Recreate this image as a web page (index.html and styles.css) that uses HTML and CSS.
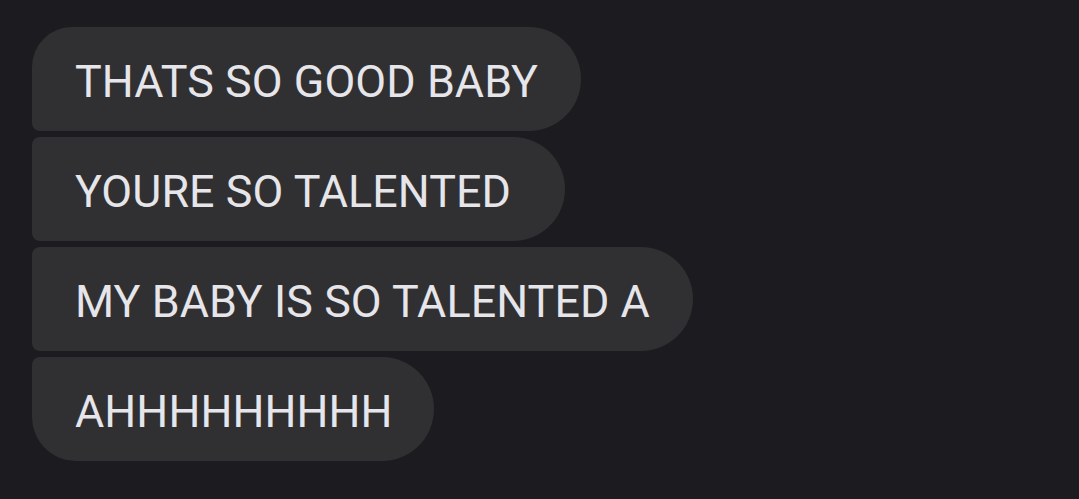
FILE: index.html
```html
<!DOCTYPE html>
<html>
<head>
<meta charset="utf-8">
<link rel="stylesheet" href="styles.css">
</head>
<body>
<div class="thread">
  <div class="bubble first">THATS SO GOOD BABY</div>
  <div class="bubble middle">YOURE SO TALENTED&nbsp;</div>
  <div class="bubble middle">MY BABY IS SO TALENTED A</div>
  <div class="bubble last">AHHHHHHHHH</div>
</div>
</body>
</html>
```
FILE: styles.css
```css
html, body {
  margin: 0;
  padding: 0;
  background: #1c1b1f;
  width: 1079px;
  height: 499px;
  overflow: hidden;
}
.thread {
  display: flex;
  flex-direction: column;
  align-items: flex-start;
  gap: 6px;
  padding: 27px 0 0 32px;
}
.bubble {
  height: 104px;
  line-height: 109px;
  padding: 0 43px 0 43px;
  background: #303032;
  color: #e6e5ea;
  font-family: Roboto, "Noto Sans", sans-serif;
  font-size: 44.8px;
  letter-spacing: 0.08px;
  white-space: nowrap;
  overflow: hidden;
  border-radius: 52px;
}
.first {
  border-radius: 40px 52px 52px 8px;
}
.middle {
  border-radius: 8px 52px 52px 8px;
}
.last {
  border-radius: 8px 52px 52px 44px;
  padding-right: 41px;
}
```
